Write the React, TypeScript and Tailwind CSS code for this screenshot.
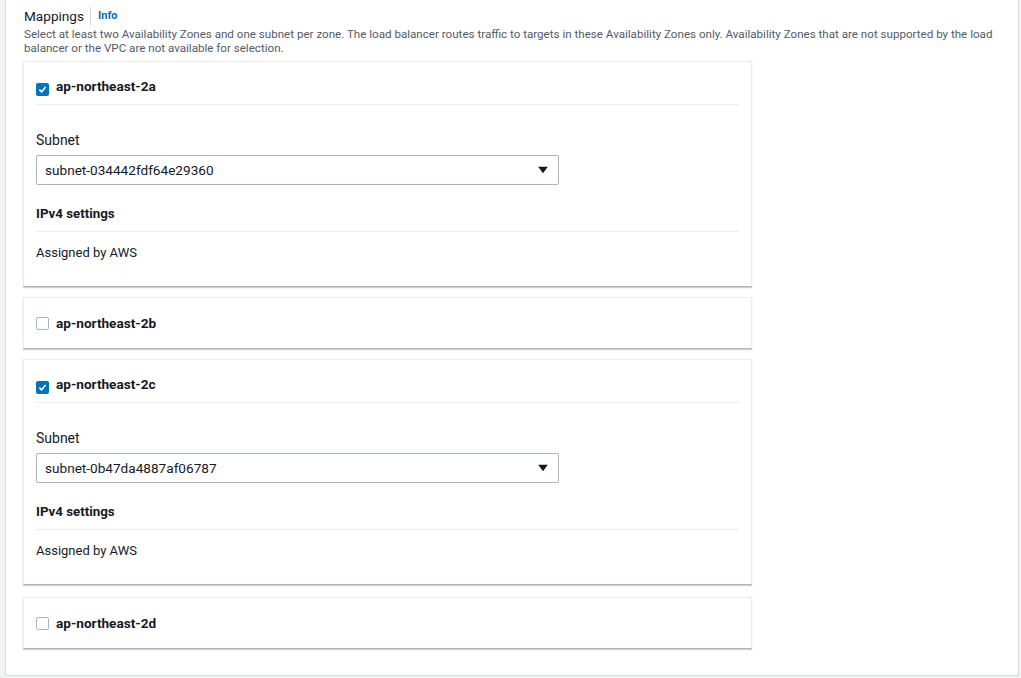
const FONT = { fontFamily: "Roboto, 'Liberation Sans', Arial, sans-serif" };

type Zone = { name: string; checked: boolean; subnet?: string };

const ZONES: Zone[] = [
  { name: "ap-northeast-2a", checked: true, subnet: "subnet-034442fdf64e29360" },
  { name: "ap-northeast-2b", checked: false },
  { name: "ap-northeast-2c", checked: true, subnet: "subnet-0b47da4887af06787" },
  { name: "ap-northeast-2d", checked: false },
];

function Checkbox({ checked }: { checked: boolean }) {
  if (checked) {
    return (
      <span className="flex h-[13px] w-[13px] items-center justify-center rounded-[2px] bg-[#0073bb]">
        <svg viewBox="0 0 14 14" className="h-[11px] w-[11px]">
          <path d="M3 7.2 L5.8 10 L11 3.8" fill="none" stroke="#fff" strokeWidth="2" />
        </svg>
      </span>
    );
  }
  return <span className="h-[13px] w-[13px] rounded-[2px] border border-[#aab7b8] bg-white" />;
}

function ZoneCard({ zone, last }: { zone: Zone; last?: boolean }) {
  return (
    <div
      className={
        "w-[729px] border border-[#eaeded] border-b-[#aab7b8] bg-white px-[12px] shadow-[0_1px_1px_0_rgba(0,28,36,0.2)] " +
        (last ? "mt-[2px]" : "")
      }
    >
      <div
        className={
          zone.checked
            ? "flex h-[43px] items-end gap-[7px] border-b border-[#eaeded] pb-[8px]"
            : "flex h-[50px] items-center gap-[7px]"
        }
      >
        <Checkbox checked={zone.checked} />
        <span className="text-[13.6px] font-bold leading-[20px] text-[#16191f]">{zone.name}</span>
      </div>
      {zone.checked && (
        <div>
          <div className="pt-[25px] text-[14px] leading-[20px] text-[#16191f]">Subnet</div>
          <div className="mt-[5px] flex h-[30px] w-[523px] items-center justify-between rounded-[2px] border border-[#aab7b8] pl-[8px] pr-[10px]">
            <span className="text-[13.6px] text-[#16191f]">{zone.subnet}</span>
            <svg viewBox="0 0 12 10" className="h-[8px] w-[10px]">
              <path d="M0 1 H12 L6 9 Z" fill="#16191f" />
            </svg>
          </div>
          <div className="border-b border-[#eaeded] pb-[7px] pt-[19px] text-[13.3px] font-bold leading-[20px] text-[#16191f]">
            IPv4 settings
          </div>
          <div className="pb-[23px] pt-[11px] text-[13px] leading-[20px] text-[#16191f]">Assigned by AWS</div>
        </div>
      )}
    </div>
  );
}

export default function App() {
  return (
    <div className="h-[678px] overflow-hidden bg-[#f2f3f3] pl-[5px] pr-[2px]" style={FONT}>
      <div className="h-[676px] border-b border-l border-r border-[#d5dbdb] bg-white pl-[17px] pt-[6px]">
        <div className="flex items-center pl-[1px]">
          <span className="text-[13.6px] leading-[20px] text-[#16191f]">Mappings</span>
          <span className="ml-[6px] mr-[7px] h-[18px] w-px bg-[#d5dbdb]" />
          <span className="text-[11px] font-bold leading-[20px] text-[#0073bb]">Info</span>
        </div>
        <p className="w-[985px] pl-[1px] pt-[1px] text-[11.6px] leading-[14px] text-[#545b64]">
          Select at least two Availability Zones and one subnet per zone. The load balancer routes traffic to targets in these
          Availability Zones only. Availability Zones that are not supported by the load balancer or the VPC are not available for
          selection.
        </p>
        <div className="mt-[6px] flex flex-col gap-[10px]">
          {ZONES.map((z, i) => (
            <ZoneCard key={z.name} zone={z} last={i === ZONES.length - 1} />
          ))}
        </div>
      </div>
    </div>
  );
}
